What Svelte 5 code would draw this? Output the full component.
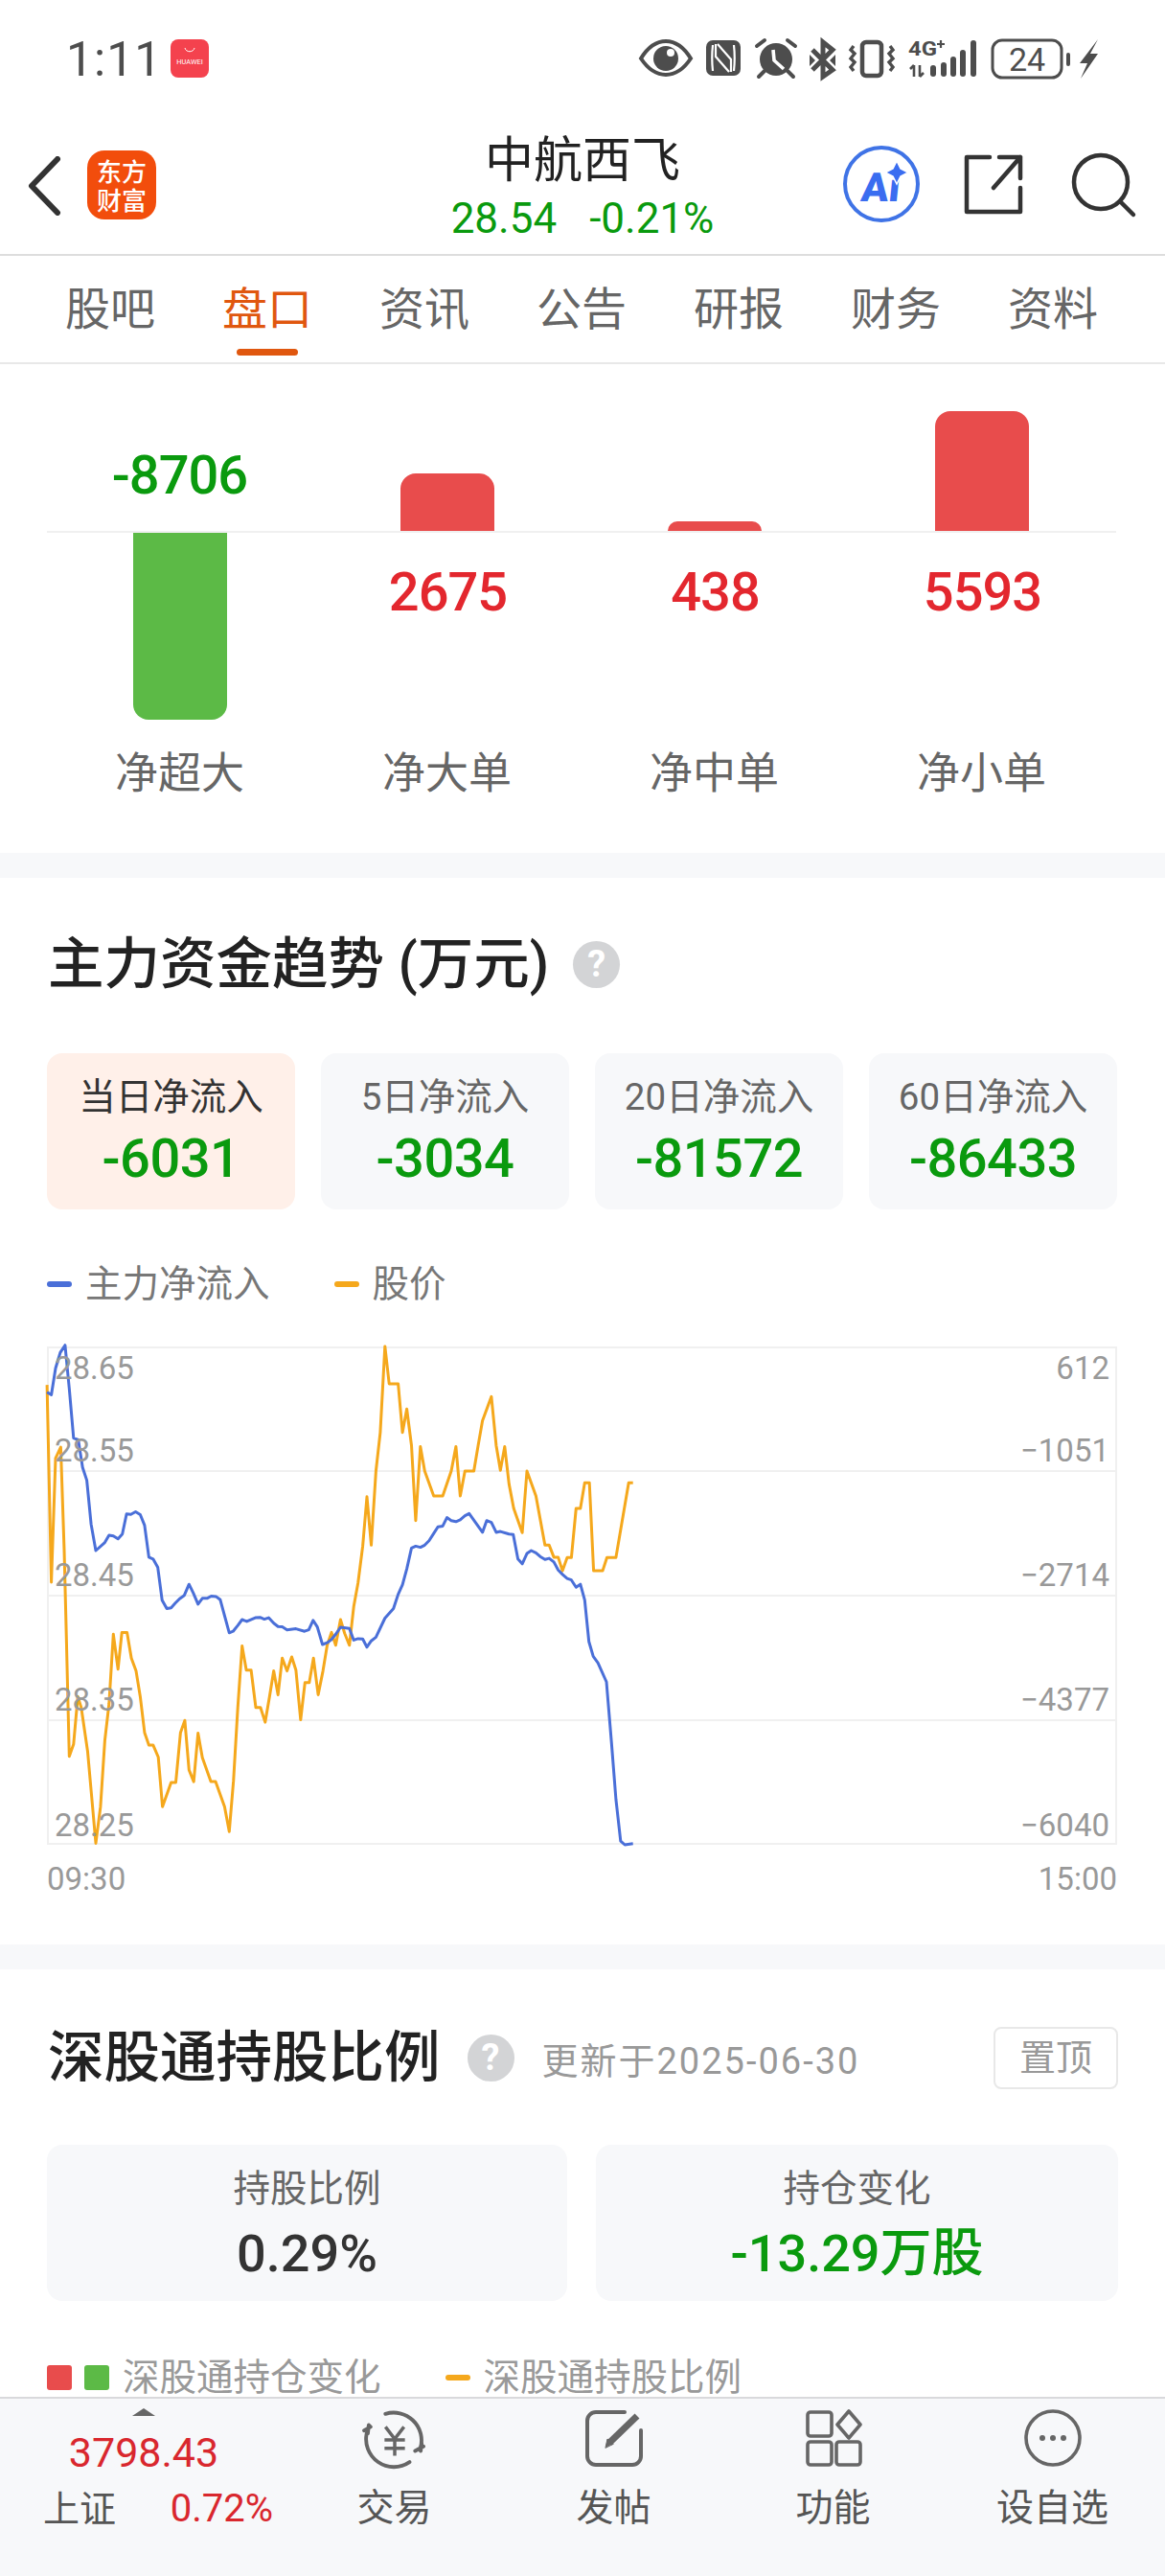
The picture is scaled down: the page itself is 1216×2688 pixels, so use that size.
<script>
	const tabs = ['股吧', '盘口', '资讯', '公告', '研报', '财务', '资料'];
	const flows = [
		{ name: '净超大', value: '-8706', height: 195, up: false },
		{ name: '净大单', value: '2675', height: 60, up: true },
		{ name: '净中单', value: '438', height: 10, up: true },
		{ name: '净小单', value: '5593', height: 125, up: true }
	];
	const periods = [
		{ name: '当日净流入', value: '-6031', active: true },
		{ name: '5日净流入', value: '-3034' },
		{ name: '20日净流入', value: '-81572' },
		{ name: '60日净流入', value: '-86433' }
	];

	// traced from the reference, in units of a 700x600 crop at 2.24 / 2.613
	const priceRaw = [110,170,120,708,130,370,142,340,150,620,155,850,162,1183,172,1150,182,1020,190,1050,205,1170,224,1420,235,1320,245,1140,255,1040,265,850,276,945,285,845,297,845,307,915,318,950,328,1020,338,1118,348,1152,358,1152,370,1185,380,1320,400,1254,411,1254,422,1118,432,1085,442,1220,453,1252,463,1120,473,1186,493,1252,504,1252,525,1320,536,1388,546,1250,556,1050,566,882,576,948,587,948,598,1050,609,1050,620,1090,630,1020,640,950,650,1015,660,915,671,950,682,912,692,948,703,1083,713,982,723,982,733,915,744,1015,755,950,765,880,775,845,785,880,796,810,806,848,817,880,827,775,837,710,848,610,858,475,868,607,879,405,889,300,900,65,910,167,931,167,941,300,951,236,962,335,972,540,983,338,993,405,1014,473,1035,473,1055,405,1066,338,1076,473,1087,405,1108,405,1118,335,1128,268,1149,202,1160,335,1170,403,1180,338,1190,440,1201,507,1221,573,1232,405,1253,473,1274,607,1284,607,1295,640,1305,640,1315,677,1326,641,1336,641,1347,507,1357,507,1367,437,1378,437,1388,677,1409,677,1419,641,1440,641,1470,437,1480,437];
	const flowRaw = [110,190,120,197,130,125,141,82,152,62,162,180,172,315,183,320,193,395,203,430,213,550,224,622,245,600,255,580,265,582,276,590,286,577,296,522,306,523,317,516,328,524,338,553,348,640,358,645,369,668,379,757,390,780,400,778,410,765,420,753,431,744,442,714,452,738,463,768,473,752,484,752,494,746,505,747,515,756,536,846,545,842,556,826,566,810,577,815,597,805,608,804,618,809,628,805,640,820,650,829,660,830,671,838,692,835,712,842,722,838,732,812,742,830,754,878,765,873,775,864,785,850,796,831,817,834,827,866,837,862,848,863,858,885,868,868,879,858,900,806,920,780,931,741,941,715,951,672,962,615,972,610,983,613,993,607,1003,595,1014,575,1024,557,1035,555,1045,532,1055,540,1066,543,1076,538,1087,527,1097,521,1128,572,1138,540,1149,545,1160,572,1170,570,1190,577,1200,578,1211,645,1221,658,1232,630,1242,622,1253,628,1263,638,1274,646,1284,643,1295,653,1305,675,1315,687,1326,698,1336,702,1347,722,1357,714,1367,757,1377,870,1387,910,1398,928,1418,980,1430,1150,1440,1300,1451,1414,1461,1424,1480,1421];

	function toPoints(raw) {
		let out = [];
		for (let i = 0; i < raw.length; i += 2) {
			out.push((raw[i] / 2.24).toFixed(1) + ',' + (raw[i + 1] / 2.613).toFixed(1));
		}
		return out.join(' ');
	}

	const pricePoints = toPoints(priceRaw);
	const flowPoints = toPoints(flowRaw);
	const gridY = [26, 155, 285, 415, 544];
	const leftAxis = [
		{ t: '28.65', y: 59 },
		{ t: '28.55', y: 145 },
		{ t: '28.45', y: 275 },
		{ t: '28.35', y: 405 },
		{ t: '28.25', y: 536 }
	];
	const rightAxis = [
		{ t: '612', y: 59 },
		{ t: '−1051', y: 145 },
		{ t: '−2714', y: 275 },
		{ t: '−4377', y: 405 },
		{ t: '−6040', y: 536 }
	];
</script>

<div class="page">
	<div class="scroll">
		<div class="status">
			<div class="time">1:11</div>
			<svg class="huawei" viewBox="0 0 40 40">
				<rect width="40" height="40" rx="8" fill="#f4424e" />
				<path d="M15 9c1 5 9 5 10 0" fill="none" stroke="#fff" stroke-width="1" />
				<text x="20" y="26" text-anchor="middle" font-size="7.4" fill="#fff">HUAWEI</text>
			</svg>
			<svg class="sys" viewBox="660 35 490 55" fill="#4d4d4d">
				<path d="M669 61c8-13 17-18 26-18s18 5 26 18c-8 12-17 17-26 17s-18-5-26-17z" fill="none" stroke="#4d4d4d" stroke-width="4" />
				<circle cx="695" cy="61" r="13" />
				<circle cx="700" cy="55" r="4" fill="#fff" />

				<rect x="737" y="42" width="36" height="37" rx="7" />
				<path d="M744 47c-1 9-1 18 0 27M766 47c1 9 1 18 0 27M749 46l14 16v13M761 75L747 59V46" fill="none" stroke="#fff" stroke-width="2.2" />

				<circle cx="810" cy="62" r="17" />
				<path d="M807 52l1 11 10 9" fill="none" stroke="#fff" stroke-width="3.6" />
				<path d="M790 48l8-6M830 48l-8-6M798 74l-6 6M822 74l6 6" fill="none" stroke="#4d4d4d" stroke-width="4" stroke-linecap="round" />

				<path d="M848 52l21 21-10 7V44l10 8-21 21" fill="none" stroke="#4d4d4d" stroke-width="5" />
				<path d="M845 57l6 6-6 6zM872 57l-6 6 6 6z" />

				<rect x="900" y="44" width="20" height="35" rx="4" fill="none" stroke="#4d4d4d" stroke-width="4.5" />
				<path d="M891 48l-3 4 4 4-4 5 4 4-4 5 3 4M929 48l3 4-4 4 4 5-4 4 4 5-3 4" fill="none" stroke="#4d4d4d" stroke-width="3.4" />

				<text x="948" y="58" font-size="20" font-weight="700" textLength="30" lengthAdjust="spacingAndGlyphs">4G</text>
				<path d="M978 46h8M982 42v8" fill="none" stroke="#4d4d4d" stroke-width="2.2" />
				<path d="M954 68v12M960 80V68M950 72l4-4M964 76l-4 4" fill="none" stroke="#4d4d4d" stroke-width="2.6" />
				<rect x="971" y="68" width="6" height="12" rx="3" />
				<rect x="982" y="65" width="6" height="15" rx="3" />
				<rect x="992" y="59" width="6" height="21" rx="3" />
				<rect x="1002" y="52" width="6" height="28" rx="3" />
				<rect x="1013" y="42" width="6" height="38" rx="3" />

				<rect x="1036" y="42" width="72" height="39" rx="10" fill="none" stroke="#4d4d4d" stroke-width="3" />
				<text x="1072" y="74" text-anchor="middle" font-size="34">24</text>
				<rect x="1113" y="55" width="4" height="14" rx="2" />
				<path d="M1146 41l-19 25h8l-7 16 18-26h-8z" />
			</svg>
		</div>

		<div class="head">
			<div class="head-left">
				<svg class="back" viewBox="0 0 36 62"><path d="M32 3L5 31l27 28" fill="none" stroke="#333" stroke-width="6" stroke-linecap="round" stroke-linejoin="round" /></svg>
				<div class="logo"><span>东方</span><span>财富</span></div>
			</div>
			<div class="head-mid">
				<div class="name">中航西飞</div>
				<div class="quote"><span>28.54</span><span>-0.21%</span></div>
			</div>
			<svg class="head-icons" viewBox="880 150 310 85">
				<circle cx="921" cy="192" r="38" fill="none" stroke="#3f73e6" stroke-width="4" />
				<text x="919" y="210" text-anchor="middle" font-size="42" font-weight="900" fill="#3a6df0" transform="skewX(-6) translate(22 0)">Ai</text>
				<path d="M937 168l4 8 8 4-8 4-4 8-4-8-8-4 8-4z" fill="#3a6df0" stroke="#fff" stroke-width="1.5" />
				<path d="M1034 164h-24v57h56v-25M1038 196l28-32M1044 164h22v22" fill="none" stroke="#333" stroke-width="4.5" stroke-linecap="round" stroke-linejoin="round" />
				<circle cx="1150" cy="190" r="28" fill="none" stroke="#333" stroke-width="4.5" />
				<path d="M1170 210l14 14" fill="none" stroke="#333" stroke-width="4.5" stroke-linecap="round" />
			</svg>
		</div>

		<div class="tabs">
			{#each tabs as tab, i}
				<div class="tab" class:on={i === 1}>{tab}</div>
			{/each}
		</div>

		<section class="bars">
			{#each flows as f}
				<div class="col">
					<div class="upper">
						{#if f.up}
							<div class="bar red" style="height: {f.height}px"></div>
						{:else}
							<div class="num green up-num">{f.value}</div>
						{/if}
					</div>
					<div class="lower">
						{#if f.up}
							<div class="num redtext">{f.value}</div>
						{:else}
							<div class="bar greenbar" style="height: {f.height}px"></div>
						{/if}
					</div>
					<div class="col-name">{f.name}</div>
				</div>
			{/each}
		</section>

		<div class="band"></div>

		<section class="trend">
			<div class="title-row">
				<h2>主力资金趋势 (万元)</h2>
				<span class="help">?</span>
			</div>
			<div class="periods">
				{#each periods as p}
					<div class="period" class:active={p.active}>
						<div class="period-name">{p.name}</div>
						<div class="period-val">{p.value}</div>
					</div>
				{/each}
			</div>
			<div class="legend">
				<span class="dash blue"></span><span class="legend-text">主力净流入</span>
				<span class="dash orange second"></span><span class="legend-text">股价</span>
			</div>
			<svg class="chart" viewBox="0 0 1216 600">
				<rect x="50" y="26" width="1115" height="518" fill="none" stroke="#f0f0f0" stroke-width="2" />
				{#each gridY as y}
					<line x1="50" x2="1165" y1={y} y2={y} stroke="#f0f0f0" stroke-width="2" />
				{/each}
				<polyline points={pricePoints} fill="none" stroke="#f5a81c" stroke-width="3" stroke-linejoin="round" />
				<polyline points={flowPoints} fill="none" stroke="#4a6fd8" stroke-width="3" stroke-linejoin="round" />
				{#each leftAxis as a}
					<text x="57" y={a.y} class="axis">{a.t}</text>
				{/each}
				{#each rightAxis as a}
					<text x="1158" y={a.y} class="axis" text-anchor="end">{a.t}</text>
				{/each}
				<text x="49" y="592" class="axis">09:30</text>
				<text x="1166" y="592" class="axis" text-anchor="end">15:00</text>
			</svg>
		</section>

		<div class="band"></div>

		<section class="hold">
			<div class="title-row hold-title">
				<h2>深股通持股比例</h2>
				<span class="help">?</span>
				<span class="updated">更新于2025-06-30</span>
				<span class="pin">置顶</span>
			</div>
			<div class="hold-cards">
				<div class="hold-card">
					<div class="period-name">持股比例</div>
					<div class="hold-val">0.29%</div>
				</div>
				<div class="hold-card">
					<div class="period-name">持仓变化</div>
					<div class="hold-val neg">-13.29万股</div>
				</div>
			</div>
			<div class="legend hold-legend">
				<span class="square r"></span><span class="square g"></span><span class="legend-text lighter">深股通持仓变化</span>
				<span class="dash orange third"></span><span class="legend-text lighter">深股通持股比例</span>
			</div>
		</section>
	</div>

	<nav class="nav">
		<div class="market">
			<div class="tri"></div>
			<div class="index">3798.43</div>
			<div class="market-row"><span class="market-name">上证</span><span class="pct">0.72%</span></div>
		</div>
		<div class="nav-item">
			<svg viewBox="0 0 72 62" fill="none" stroke="#666" stroke-width="4" stroke-linecap="round">
				<path d="M26 5a30 30 0 0 1 38 36M52 57a30 30 0 0 1-46-32" />
				<path d="M58 45l9-5M65 37l-1 8M10 19L3 23M8 17l-1 9" />
				<path d="M26 19l10 13 10-13M36 32v18M25 33h22M25 42h22" stroke-width="3.6" stroke-linecap="butt" />
			</svg>
			<span>交易</span>
		</div>
		<div class="nav-item">
			<svg viewBox="0 0 60 60" fill="none" stroke="#666" stroke-width="4" stroke-linecap="round" stroke-linejoin="round">
				<path d="M41 3H11a9 9 0 0 0-9 9v37a9 9 0 0 0 9 9h38a9 9 0 0 0 9-9V22" />
				<path d="M54 7L25 35" stroke-width="7" stroke-linecap="butt" />
				<path d="M21 40l2-9 6 5z" fill="#666" stroke-width="1" />
			</svg>
			<span>发帖</span>
		</div>
		<div class="nav-item">
			<svg viewBox="0 0 60 60" fill="none" stroke="#666" stroke-width="3.6" stroke-linejoin="round">
				<rect x="3" y="3" width="25" height="25" rx="3" />
				<rect x="3" y="34" width="25" height="24" rx="3" />
				<rect x="33" y="34" width="25" height="24" rx="3" />
				<path d="M46 2l12 14-12 14-12-14z" />
			</svg>
			<span>功能</span>
		</div>
		<div class="nav-item">
			<svg viewBox="0 0 60 60" fill="none" stroke="#666" stroke-width="3.6">
				<circle cx="30" cy="30" r="28" />
				<circle cx="19" cy="30" r="3" fill="#666" stroke="none" />
				<circle cx="30" cy="30" r="3" fill="#666" stroke="none" />
				<circle cx="41" cy="30" r="3" fill="#666" stroke="none" />
			</svg>
			<span>设自选</span>
		</div>
	</nav>
</div>

<style>
	:global(body) {
		margin: 0;
		background: #fff;
	}

	.page {
		width: 1216px;
		height: 2688px;
		display: flex;
		flex-direction: column;
		overflow: hidden;
		font-family: Roboto, 'Noto Sans CJK SC', sans-serif;
		color: #333;
	}

	.scroll {
		flex: 1;
		min-height: 0;
	}

	.status {
		height: 120px;
		display: flex;
		align-items: flex-start;
		padding: 35px 0 0 69px;
		box-sizing: border-box;
	}

	.time {
		font-size: 50px;
		line-height: 54px;
		color: #4d4d4d;
		width: 109px;
		letter-spacing: 1px;
	}

	.huawei {
		width: 40px;
		height: 40px;
		margin-top: 6px;
	}

	.huawei text,
	.sys text {
		font-family: Roboto, sans-serif;
	}

	.sys {
		width: 490px;
		height: 55px;
		margin-left: auto;
		margin-right: 66px;
	}

	.head {
		height: 145px;
		display: grid;
		grid-template-columns: 1fr auto 1fr;
		border-bottom: 2px solid #ddd;
	}

	.head-left {
		display: flex;
		align-items: flex-start;
		padding: 37px 0 0 28px;
	}

	.back {
		width: 36px;
		height: 62px;
		margin-top: 6px;
	}

	.logo {
		width: 72px;
		height: 72px;
		margin-left: 27px;
		background: #f24d0c;
		border-radius: 18px;
		color: #fff;
		font-size: 26px;
		font-weight: 500;
		line-height: 30px;
		display: flex;
		flex-direction: column;
		align-items: center;
		justify-content: center;
		font-family: 'Noto Sans CJK SC', sans-serif;
	}

	.head-mid {
		text-align: center;
		padding-top: 13px;
	}

	.name {
		font-size: 51px;
		line-height: 70px;
		color: #222;
	}

	.quote {
		font-size: 44px;
		line-height: 50px;
		color: #0a9a0e;
		display: flex;
		gap: 34px;
		justify-content: center;
	}

	.head-icons {
		width: 310px;
		height: 85px;
		justify-self: end;
		margin: 30px 27px 0 0;
	}

	.head-icons text {
		font-family: Roboto, sans-serif;
	}

	.tabs {
		height: 111px;
		display: flex;
		padding-left: 33px;
		border-bottom: 2px solid #e8e8e8;
	}

	.tab {
		width: 164px;
		text-align: center;
		font-size: 47px;
		line-height: 112px;
		height: 111px;
		color: #666;
		position: relative;
	}

	.tab.on {
		color: #e0570f;
	}

	.tab.on::after {
		content: '';
		position: absolute;
		left: 50%;
		margin-left: -32px;
		bottom: 7px;
		width: 64px;
		height: 7px;
		border-radius: 4px;
		background: #e0570f;
	}

	.bars {
		height: 510px;
		padding: 0 49px;
		display: grid;
		grid-template-columns: repeat(4, 1fr);
		margin-right: 2px;
	}

	.col {
		display: flex;
		flex-direction: column;
		align-items: center;
	}

	.upper {
		width: 100%;
		height: 174px;
		border-bottom: 2px solid #f0f0f0;
		display: flex;
		flex-direction: column;
		align-items: center;
		justify-content: flex-end;
	}

	.lower {
		width: 100%;
		height: 196px;
		display: flex;
		flex-direction: column;
		align-items: center;
	}

	.bar {
		width: 98px;
		margin-right: 1px;
	}

	.bar.red {
		background: #e84c4c;
		border-radius: 16px 16px 0 0;
	}

	.bar.greenbar {
		background: #5cba46;
		border-radius: 0 0 16px 16px;
	}

	.num {
		font-size: 56px;
		font-weight: 500;
		line-height: 60px;
		letter-spacing: -1px;
	}

	.num.green {
		color: #0a9a0e;
	}

	.up-num {
		margin-bottom: 28px;
		margin-right: 2px;
	}

	.redtext {
		color: #e3272e;
		margin-top: 32px;
	}

	.col-name {
		font-size: 45px;
		line-height: 60px;
		margin-top: 26px;
		margin-right: 2px;
		color: #666;
	}

	.band {
		height: 26px;
		background: #f7f8fa;
	}

	.trend {
		height: 1113px;
		padding-top: 55px;
		box-sizing: border-box;
		position: relative;
	}

	.title-row {
		display: flex;
		align-items: center;
		height: 70px;
		padding: 0 49px 0 50px;
	}

	h2 {
		margin: 0;
		font-size: 58.5px;
		font-weight: 500;
		line-height: 70px;
		color: #222;
	}

	.help {
		width: 49px;
		height: 49px;
		margin-left: 25px;
		border-radius: 50%;
		background: #d3d4d6;
		color: #fff;
		font-size: 38px;
		font-weight: 700;
		line-height: 49px;
		text-align: center;
	}

	.periods {
		display: grid;
		grid-template-columns: repeat(4, 1fr);
		gap: 27px;
		margin: 58px 50px 0 49px;
	}

	.period {
		height: 163px;
		border-radius: 16px;
		background: #f7f8fa;
		text-align: center;
		padding-top: 21px;
		box-sizing: border-box;
	}

	.period.active {
		background: #fff0e9;
	}

	.period-name {
		font-size: 38.5px;
		line-height: 50px;
		color: #666;
	}

	.period.active .period-name {
		color: #333;
	}

	.period-val {
		font-size: 56px;
		font-weight: 500;
		line-height: 66px;
		margin-top: 6px;
		letter-spacing: -0.5px;
		color: #0a9a0e;
	}

	.legend {
		display: flex;
		align-items: center;
		height: 50px;
		padding-left: 49px;
		margin-top: 53px;
	}

	.legend-text {
		font-size: 38.5px;
		line-height: 50px;
		color: #777;
		margin-left: 14px;
	}

	.legend-text.lighter {
		color: #999;
	}

	.dash {
		width: 26px;
		height: 6px;
		border-radius: 3px;
	}

	.dash.blue {
		background: #4a6fd8;
	}

	.dash.orange {
		background: #f5a81c;
	}

	.dash.second,
	.dash.third {
		margin-left: 67px;
	}

	.chart {
		width: 1216px;
		height: 600px;
		display: block;
		margin-top: 15px;
	}

	.axis {
		font-family: Roboto, sans-serif;
		font-size: 33px;
		fill: #999;
	}

	.hold {
		padding-top: 57px;
	}

	.hold-title .help {
		margin-left: 28px;
	}

	.updated {
		font-size: 38px;
		letter-spacing: 2px;
		color: #999;
		margin-left: 29px;
	}

	.pin {
		margin-left: auto;
		width: 130px;
		height: 65px;
		border: 2px solid #e8e8e8;
		border-radius: 8px;
		box-sizing: border-box;
		font-size: 38px;
		line-height: 60px;
		text-align: center;
		color: #999;
	}

	.hold-cards {
		display: grid;
		grid-template-columns: 543px 545px;
		gap: 30px;
		margin: 56px 49px 0;
	}

	.hold-card {
		height: 163px;
		border-radius: 16px;
		background: #f7f8fa;
		text-align: center;
		padding-top: 21px;
		box-sizing: border-box;
	}

	.hold-val {
		font-size: 54px;
		font-weight: 500;
		line-height: 66px;
		margin-top: 10px;
		color: #333;
	}

	.hold-val.neg {
		color: #0a9a0e;
	}

	.hold-legend {
		height: 40px;
		margin-top: 60px;
	}

	.hold-legend .legend-text {
		line-height: 40px;
	}

	.square {
		width: 26px;
		height: 26px;
		border-radius: 3px;
	}

	.square.r {
		background: #e84c4c;
	}

	.square.g {
		background: #5cba46;
		margin-left: 13px;
	}

	.nav {
		height: 187px;
		flex-shrink: 0;
		background: #f7f8fa;
		border-top: 2px solid #d9d9dc;
		box-sizing: border-box;
		display: flex;
	}

	.market {
		width: 297px;
		padding: 10px 12px 0 45px;
		box-sizing: border-box;
	}

	.tri {
		width: 0;
		height: 0;
		margin-left: 93px;
		border-left: 12px solid transparent;
		border-right: 12px solid transparent;
		border-bottom: 8px solid #666;
	}

	.index {
		font-size: 43px;
		line-height: 50px;
		color: #d9272e;
		text-align: center;
		margin: 13px 30px 0 0;
	}

	.market-row {
		display: flex;
		justify-content: space-between;
		align-items: baseline;
		margin-top: 9px;
	}

	.market-name {
		font-size: 38px;
		line-height: 50px;
		color: #555;
	}

	.pct {
		font-size: 40px;
		color: #d9272e;
	}

	.nav-item {
		width: 229px;
		display: flex;
		flex-direction: column;
		align-items: center;
		padding-top: 11px;
		box-sizing: border-box;
	}

	.nav-item svg {
		width: 60px;
		height: 60px;
		overflow: visible;
	}

	.nav-item:nth-child(2) svg {
		width: 70px;
	}

	.nav-item span {
		font-size: 39px;
		line-height: 50px;
		margin-top: 18px;
		color: #555;
	}
</style>
